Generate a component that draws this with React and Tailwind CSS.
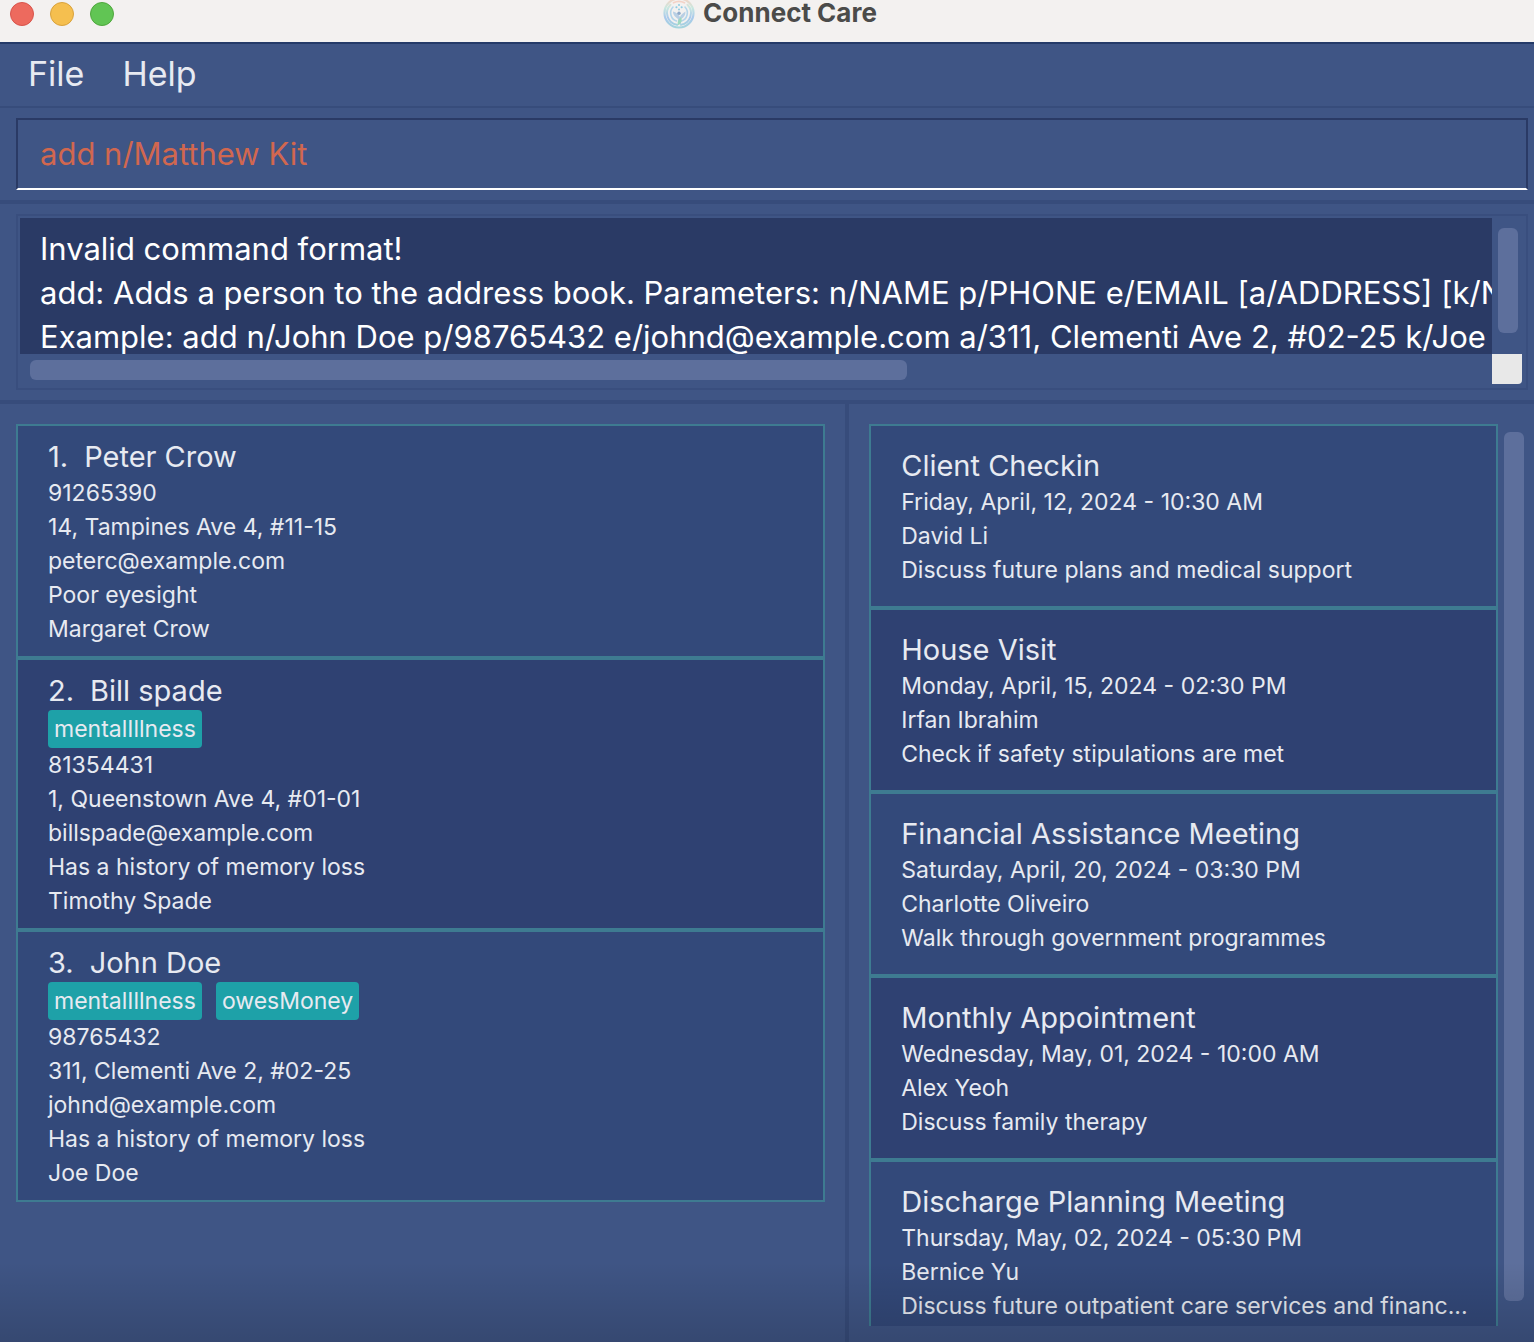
import React, { useState } from 'react';

const persons = [
  {
    name: 'Peter Crow',
    tags: [],
    details: ['91265390', '14, Tampines Ave 4, #11-15', 'peterc@example.com', 'Poor eyesight', 'Margaret Crow'],
  },
  {
    name: 'Bill spade',
    tags: ['mentalIllness'],
    details: ['81354431', '1, Queenstown Ave 4, #01-01', 'billspade@example.com', 'Has a history of memory loss', 'Timothy Spade'],
  },
  {
    name: 'John Doe',
    tags: ['mentalIllness', 'owesMoney'],
    details: ['98765432', '311, Clementi Ave 2, #02-25', 'johnd@example.com', 'Has a history of memory loss', 'Joe Doe'],
  },
];

const appointments = [
  { title: 'Client Checkin', details: ['Friday, April, 12, 2024 - 10:30 AM', 'David Li', 'Discuss future plans and medical support'] },
  { title: 'House Visit', details: ['Monday, April, 15, 2024 - 02:30 PM', 'Irfan Ibrahim', 'Check if safety stipulations are met'] },
  { title: 'Financial Assistance Meeting', details: ['Saturday, April, 20, 2024 - 03:30 PM', 'Charlotte Oliveiro', 'Walk through government programmes'] },
  { title: 'Monthly Appointment', details: ['Wednesday, May, 01, 2024 - 10:00 AM', 'Alex Yeoh', 'Discuss family therapy'] },
  { title: 'Discharge Planning Meeting', details: ['Thursday, May, 02, 2024 - 05:30 PM', 'Bernice Yu', 'Discuss future outpatient care services and financ...'] },
];

const feedback = [
  'Invalid command format!',
  'add: Adds a person to the address book. Parameters: n/NAME p/PHONE e/EMAIL [a/ADDRESS] [k/NEXT OF KIN]',
  'Example: add n/John Doe p/98765432 e/johnd@example.com a/311, Clementi Ave 2, #02-25 k/Joe Doe',
].join('\n');

function Logo() {
  return (
    <svg viewBox="0 0 32 32" className="size-8 shrink-0" fill="none" strokeLinecap="round" aria-hidden="true">
      <defs>
        <linearGradient id="ring" x1="0" y1="2" x2="0" y2="31" gradientUnits="userSpaceOnUse">
          <stop stopColor="#f6d3c4" />
          <stop offset="0.3" stopColor="#c8e8e0" />
          <stop offset="0.65" stopColor="#a9c9ec" />
          <stop offset="1" stopColor="#a4d4dc" />
        </linearGradient>
      </defs>
      <circle cx="16" cy="16" r="14.5" stroke="url(#ring)" strokeWidth="2.2" />
      <path d="M7.5 7.8a11.8 11.8 0 0 0 6.500 20M24.500 7.800a11.800 11.800 0 0 1-6.500 20" stroke="url(#ring)" strokeWidth="2" />
      <path d="M10 10a8.600 8.600 0 0 0 3.500 14M22 10a8.600 8.600 0 0 1-3.500 14" stroke="#b4d5ea" strokeWidth="1.600" />
      <path d="M10.500 5.800a11.800 11.800 0 0 1 11 0" stroke="#f4d2c6" strokeWidth="1.600" />
      <path d="M10 14.500c0 4 2.500 5.500 5 7.500v5l3 .5v-5.500c3-1.500 4.500-4 4.500-7.500-2.500 1.500-4.500 3-5.500 5.500-1.500-3-4-4.500-7-5.500Z" fill="#b9cfe4" />
      <path d="M14.500 28.500c0-4 1-6.500 3.500-8.500 1.500 3.500.5 7-3.500 8.500Z" fill="#9fd9c0" />
      <path d="M16 8v.1M16 12.500v.1M13.400 10.200h.1M18.600 10.200h.1" stroke="#8ecbe2" strokeWidth="2" />
      <circle cx="16" cy="16.200" r="1.700" fill="#8fa9c9" />
    </svg>
  );
}

function PersonCard({ person, index }) {
  return (
    <li className="border-2 border-[#3e7b91] px-[30px] pt-3 pb-2.5 odd:bg-[#33497a] even:bg-[#2f4172]">
      <h2 className="flex gap-4 text-[29px] leading-[38px]">
        <span>{index}.</span>
        <span>{person.name}</span>
      </h2>
      {person.tags.length > 0 && (
        <ul className="flex flex-wrap gap-[14px]">
          {person.tags.map((tag) => (
            <li key={tag} className="rounded bg-[#1ea1a8] px-1.5 leading-[38px]">
              {tag}
            </li>
          ))}
        </ul>
      )}
      {person.details.map((line) => (
        <p key={line}>{line}</p>
      ))}
    </li>
  );
}

function AppointmentCard({ appointment }) {
  return (
    <li className="border-2 border-[#3e7b91] px-[30px] pt-[21px] pb-[19px] odd:bg-[#33497a] even:bg-[#2f4172]">
      <h2 className="text-[29px] leading-[38px]">{appointment.title}</h2>
      {appointment.details.map((line) => (
        <p key={line} className="whitespace-nowrap">{line}</p>
      ))}
    </li>
  );
}

export default function App() {
  const [command, setCommand] = useState('add n/Matthew Kit');

  return (
    <div className="relative flex h-screen flex-col overflow-hidden bg-[#3f5585] font-[Inter,sans-serif] text-[23px] leading-[34px] text-[#e7eaf1]">
      <header className="grid h-[42px] shrink-0 grid-cols-[1fr_auto_1fr] items-start bg-[#f3f1f0] px-2.5">
        <div className="flex gap-4 pt-0.5">
          <button aria-label="Close" className="size-6 rounded-full border border-[#d8544b] bg-[#ed6a5e]" />
          <button aria-label="Minimize" className="size-6 rounded-full border border-[#d9a23c] bg-[#f5bf4f]" />
          <button aria-label="Zoom" className="size-6 rounded-full border border-[#4fa73d] bg-[#61c554]" />
        </div>
        <div className="flex h-[26px] items-center gap-2 pl-1.5">
          <Logo />
          <h1 className="text-[26px] leading-[26px] font-bold text-[#4b4b4a]">Connect Care</h1>
        </div>
      </header>

      <nav className="flex h-[66px] shrink-0 items-center gap-[38px] border-t-2 border-b-2 border-t-[#243a68] border-b-[#374c7b] px-7 pb-0.5 text-[34px]">
        <button>File</button>
        <button>Help</button>
      </nav>

      <div className="shrink-0 border-b-4 border-[#374c7b] pt-2.5 pr-1.5 pb-2.5 pl-4">
        <input
          aria-label="Command"
          value={command}
          onChange={(e) => setCommand(e.target.value)}
          className="block h-[72px] w-full border-2 border-[#2a3a65] border-b-white px-[22px] pb-0.5 text-[31px] text-[#d1674f] outline-none"
        />
      </div>

      <div className="shrink-0 border-b-4 border-[#374c7b] pt-2.5 pr-1.5 pb-2.5 pl-4">
        <div className="grid grid-cols-[1fr_30px] grid-rows-[136px_30px] border-2 border-[#394e7e] pt-0.5 pr-1 pb-1 pl-0.5">
          <textarea
            aria-label="Command result"
            readOnly
            wrap="off"
            value={feedback}
            className="block size-full resize-none overflow-hidden bg-[#2a3a65] pt-[9px] pl-5 text-[31px] leading-[44px] text-white outline-none"
          />
          <div className="pt-2.5 pr-1 pl-1.5">
            <div className="h-[105px] rounded-md bg-[#5d6f9c]" />
          </div>
          <div className="pt-1.5 pl-2.5">
            <div className="h-5 w-3/5 rounded-md bg-[#5d6f9c]" />
          </div>
          <div className="rounded-br bg-[#e8e8e8]" />
        </div>
      </div>

      <main className="flex min-h-0 flex-1">
        <section aria-label="Persons" className="w-[55.1%] shrink-0 pt-5 pr-5 pb-4 pl-4">
          <ol>
            {persons.map((person, i) => (
              <PersonCard key={person.name} person={person} index={i + 1} />
            ))}
          </ol>
        </section>
        <div className="w-1 shrink-0 bg-[#374c7b]" />
        <section aria-label="Appointments" className="flex min-w-0 flex-1 gap-1.5 pt-5 pr-2.5 pb-4 pl-5">
          <ul className="min-w-0 flex-1 overflow-hidden">
            {appointments.map((appointment) => (
              <AppointmentCard key={appointment.title} appointment={appointment} />
            ))}
          </ul>
          <div className="w-5 shrink-0 pt-2 pb-[25px]">
            <div className="h-full rounded-md bg-[#5d6f9c]" />
          </div>
        </section>
      </main>

      <div className="pointer-events-none absolute inset-x-0 bottom-0 h-20 bg-linear-to-b from-transparent to-black/15" />
    </div>
  );
}
